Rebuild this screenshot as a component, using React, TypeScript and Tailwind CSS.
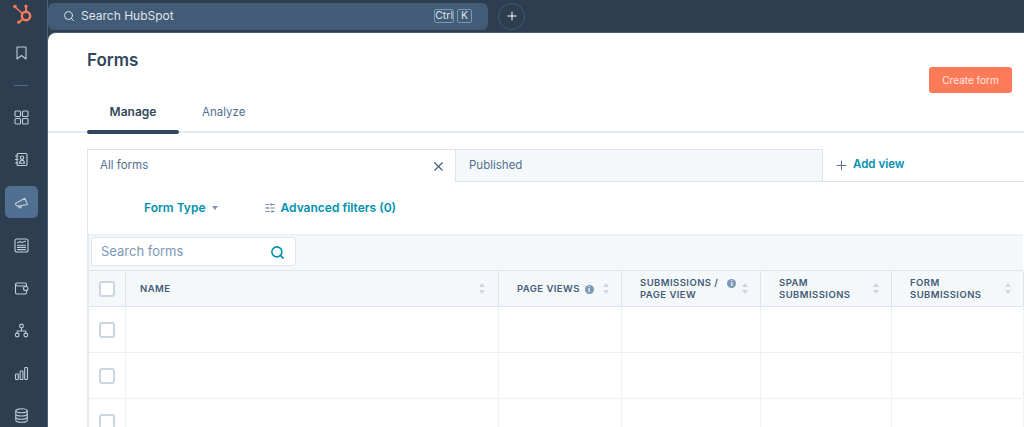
import { Plus, Search, SlidersHorizontal, X } from 'lucide-react';
import type { ReactNode } from 'react';

const FONT = "font-['Inter','Noto_Sans',sans-serif]";

function SproutLogo() {
  return (
    <svg width="22" height="22" viewBox="0 0 22 22" fill="none" stroke="#ff7a59" className="ml-[12px] mt-[3px] shrink-0">
      <circle cx="14" cy="13" r="4.2" strokeWidth="2.4" />
      <path d="M14 9V4" strokeWidth="2" />
      <circle cx="14" cy="3.2" r="1.6" fill="#ff7a59" stroke="none" />
      <path d="M10.6 10.5 3.5 4.5" strokeWidth="1.6" />
      <circle cx="3" cy="3.5" r="1.8" fill="#ff7a59" stroke="none" />
      <path d="M10.8 16.2 7.2 19" strokeWidth="1.8" />
      <circle cx="6.8" cy="19.2" r="1.6" fill="#ff7a59" stroke="none" />
    </svg>
  );
}

function Glyph({ children }: { children: ReactNode }) {
  return (
    <svg width="15" height="15" viewBox="0 0 15 15" fill="none" stroke="#c0ccd8" strokeWidth="1.1" strokeLinejoin="round" strokeLinecap="round">
      {children}
    </svg>
  );
}

const GridIcon = () => (
  <Glyph>
    <rect x="1" y="1" width="5.5" height="5.5" rx="1" />
    <rect x="8.5" y="1" width="5.5" height="5.5" rx="1" />
    <rect x="1" y="8.5" width="5.5" height="5.5" rx="1" />
    <rect x="8.5" y="8.5" width="5.5" height="5.5" rx="1" />
  </Glyph>
);

const ContactIcon = () => (
  <Glyph>
    <rect x="3" y="1.5" width="10" height="12" rx="1" />
    <path d="M1.5 4h2.5M1.5 7.5h2.5M1.5 11h2.5" />
    <circle cx="8" cy="5.7" r="1.7" />
    <path d="M5.5 11.2c.2-2 1.2-3 2.5-3s2.3 1 2.5 3z" />
  </Glyph>
);

const MegaphoneIcon = () => (
  <Glyph>
    <path d="M1.5 8.5 10.8 3.2l2.7 6.3-8.8 1.6-2.4-.4z" />
    <path d="M4.5 11l.7 2 2-.5-.6-1.9" />
  </Glyph>
);

const NewsIcon = () => (
  <Glyph>
    <rect x="1" y="1" width="13" height="13" rx="2" />
    <path d="M3.5 4.8 6 3.6l2 1 3.5-1.4M3.5 7.2h8M3.5 9.4h8M3.5 11.6h8" />
  </Glyph>
);

const WalletIcon = () => (
  <Glyph>
    <path d="M12.5 5V3.5A1.5 1.5 0 0 0 11 2H3a1.5 1.5 0 0 0-1.5 1.5v8A1.5 1.5 0 0 0 3 13h8a1.5 1.5 0 0 0 1.5-1.5V10" />
    <path d="M1.8 3.5c.4.9 1 1.5 2 1.5h8.7" />
    <rect x="9.5" y="5.5" width="4.5" height="4" rx="2" />
  </Glyph>
);

const TreeIcon = () => (
  <Glyph>
    <circle cx="7.5" cy="3" r="1.9" />
    <circle cx="3.2" cy="12" r="1.9" />
    <circle cx="11.8" cy="12" r="1.9" />
    <path d="M7.5 5v3M3.2 10V8h8.6v2" />
  </Glyph>
);

const BarsIcon = () => (
  <Glyph>
    <rect x="1.5" y="8" width="2.8" height="5.5" rx=".7" />
    <rect x="6.1" y="5" width="2.8" height="8.5" rx=".7" />
    <rect x="10.7" y="1.5" width="2.8" height="12" rx=".7" />
  </Glyph>
);

const DatabaseIcon = () => (
  <Glyph>
    <ellipse cx="7.5" cy="2.8" rx="5.7" ry="2" />
    <path d="M1.8 2.8v9.4c0 1.1 2.6 2 5.7 2s5.7-.9 5.7-2V2.8" />
    <path d="M1.8 6c0 1.1 2.6 2 5.7 2s5.7-.9 5.7-2M1.8 9.2c0 1.1 2.6 2 5.7 2s5.7-.9 5.7-2" />
  </Glyph>
);

function SortArrows() {
  return (
    <span className="flex flex-col gap-[3px]">
      <span className="h-0 w-0 border-x-[3.5px] border-b-[4.5px] border-x-transparent border-b-[#cbd6e2]" />
      <span className="h-0 w-0 border-x-[3.5px] border-t-[4.5px] border-x-transparent border-t-[#cbd6e2]" />
    </span>
  );
}

function InfoDot() {
  return (
    <span className="flex h-[9px] w-[9px] items-center justify-center rounded-full bg-[#7c98b6] text-[7px] font-bold leading-none text-white">
      i
    </span>
  );
}

function Checkbox() {
  return <span className="block h-4 w-4 rounded-[3px] border-2 border-[#cbd6e2] bg-white" />;
}

const SIDE_ICONS = [
  { icon: GridIcon, h: 'h-[42px]' },
  { icon: ContactIcon, h: 'h-[43px]' },
  { icon: MegaphoneIcon, h: 'h-[42px]', active: true },
  { icon: NewsIcon, h: 'h-[44px]' },
  { icon: WalletIcon, h: 'h-[42px]' },
  { icon: TreeIcon, h: 'h-[43px]' },
  { icon: BarsIcon, h: 'h-[42px]' },
  { icon: DatabaseIcon, h: 'h-[42px]' },
];

function Sidebar() {
  return (
    <aside className="flex w-[48px] shrink-0 flex-col items-start overflow-hidden border-r border-[#4a6078]">
      <SproutLogo />
      <div className="mt-[21px] w-[42px] shrink-0">
        <svg width="11" height="14" viewBox="0 0 11 14" fill="none" stroke="#c0ccd8" strokeWidth="1.1" strokeLinejoin="round" className="mx-auto">
          <path d="M1 1h9v12l-4.5-3.5L1 13z" />
        </svg>
      </div>
      <div className="ml-[14px] mt-[25px] h-px w-[14px] shrink-0 bg-[#516f90]" />
      <div className="mt-[10px] flex shrink-0 flex-col">
        {SIDE_ICONS.map(({ icon: Icon, h, active }, i) => (
          <div key={i} className={`flex w-[42px] items-center justify-center ${h}`}>
            <div className={`flex h-[32px] w-[33px] items-center justify-center rounded-[5px] ${active ? 'bg-[#516f90]' : ''}`}>
              <Icon />
            </div>
          </div>
        ))}
      </div>
    </aside>
  );
}

function TopBar() {
  return (
    <div className="flex h-[32px] shrink-0 items-center">
      <div className="flex h-[27px] w-[440px] items-center rounded-[6px] bg-[#425b76] pl-[15px] pr-[16px] text-[12px] text-[#dfe3eb]">
        <Search size={12} strokeWidth={2} className="mr-[6px]" />
        <span className="flex-1">Search HubSpot</span>
        <span className="mr-[3px] rounded-[2px] border border-[#7c98b6] text-[10.5px] leading-[12px]">Ctrl</span>
        <span className="rounded-[2px] border border-[#7c98b6] px-[3px] text-[10.5px] leading-[12px]">K</span>
      </div>
      <div className="ml-[10px] flex h-[27px] w-[27px] items-center justify-center rounded-full border border-[#425b76] text-white">
        <Plus size={14} strokeWidth={1.75} />
      </div>
    </div>
  );
}

function Header() {
  return (
    <div className="relative border-b-2 border-[#e5ebf2]">
      <h1 className="pl-[39px] pt-[16px] text-[17px] font-semibold leading-[22px] text-[#33475b]">Forms</h1>
      <div className="mt-[33px] flex pl-[39px] text-[12px] leading-[16px]">
        <div className="relative h-[27px] w-[92px] text-center font-semibold text-[#33475b]">
          Manage
          <span className="absolute inset-x-0 bottom-[-3px] h-[4px] rounded-[2px] bg-[#2e475d]" />
        </div>
        <div className="ml-[23px] text-[11.5px] text-[#516f90]">Analyze</div>
      </div>
      <button type="button" className="absolute right-[12px] top-[34px] h-[26px] w-[83px] rounded-[3px] bg-[#ff7a59] text-[10px] text-[#ffe9e3]">
        Create form
      </button>
    </div>
  );
}

function ViewTabs() {
  return (
    <div className="ml-[39px] mt-[16px] flex h-[33px]">
      <div className="flex w-[369px] items-center justify-between border-l border-r border-t border-[#dfe3eb] pl-[12px] pr-[9px] text-[11.5px] text-[#516f90]">
        All forms
        <X size={15} strokeWidth={1.75} className="text-[#425b76]" />
      </div>
      <div className="flex w-[367px] items-center border-b border-r border-t border-[#dfe3eb] bg-[#f5f8fa] pl-[13px] text-[11.5px] text-[#516f90]">
        Published
      </div>
      <div className="flex flex-1 items-center gap-[4px] border-b border-[#dfe3eb] pl-[11px] text-[11.5px] font-semibold text-[#0091ae]">
        <Plus size={15} strokeWidth={1.5} className="text-[#516f90]" />
        Add view
      </div>
    </div>
  );
}

function Filters() {
  return (
    <div className="ml-[39px] flex h-[52px] items-center border-l border-[#dfe3eb] pl-[56px] text-[12px] font-semibold text-[#0091ae]">
      Form Type
      <span className="ml-[6px] h-0 w-0 border-x-[3.5px] border-t-[4px] border-x-transparent border-t-[#7c98b6]" />
      <SlidersHorizontal size={12} strokeWidth={1.5} className="ml-[46px] text-[#516f90]" />
      <span className="ml-[5px]">Advanced filters (0)</span>
    </div>
  );
}

const COLUMNS = [
  { w: 'w-[373px]', label: ['NAME'], gap: 'gap-[5px]', pad: 'pl-[14px] pr-[13px]' },
  { w: 'w-[123px]', label: ['PAGE VIEWS'], info: true, gap: 'gap-[5px]', pad: 'pl-[18px] pr-[12px]' },
  { w: 'w-[139px]', label: ['SUBMISSIONS /', 'PAGE VIEW'], info: true, gap: 'gap-[9px]', pad: 'pl-[18px] pr-[12px]' },
  { w: 'w-[131px]', label: ['SPAM', 'SUBMISSIONS'], gap: 'gap-[5px]', pad: 'pl-[18px] pr-[12px]' },
  { w: 'w-[132px]', label: ['FORM', 'SUBMISSIONS'], gap: 'gap-[5px]', pad: 'pl-[18px] pr-[12px]' },
];

function Table() {
  return (
    <div className="ml-[39px] mr-[1px] border-l-2 border-[#e5ebf2]">
      <div className="flex h-[36px] items-start border-t-2 border-[#eef2f6] bg-[#f5f8fa] pl-[2px] pt-[1px]">
        <div className="flex h-[29px] w-[205px] items-center justify-between rounded-[3px] border border-[#dfe3eb] bg-white pl-[9px] pr-[10px] pt-[1px] text-[13px] text-[#7c98b6]">
          Search forms
          <Search size={15} strokeWidth={2.5} className="text-[#0091ae]" />
        </div>
      </div>
      <div className="flex h-[37px] border-y border-[#dfe3eb] bg-[#f5f8fa]">
        <div className="flex w-[37px] shrink-0 items-center justify-center border-r border-[#dfe3eb]">
          <Checkbox />
        </div>
        {COLUMNS.map((col, i) => (
          <div key={i} className={`flex shrink-0 items-center justify-between border-r border-[#dfe3eb] ${col.w} ${col.pad}`}>
            <div className={`flex items-start text-[9.5px] font-semibold leading-[12px] tracking-[0.45px] text-[#425b76] ${col.gap}`}>
              <div>
                {col.label.map((line) => (
                  <div key={line}>{line}</div>
                ))}
              </div>
              {col.info && <span className="mt-[2px]"><InfoDot /></span>}
            </div>
            <SortArrows />
          </div>
        ))}
      </div>
      {[0, 1, 2].map((row) => (
        <div key={row} className="flex h-[46px] border-b border-[#eaf0f6]">
          <div className="flex w-[37px] shrink-0 items-center justify-center border-r border-[#eaf0f6]">
            <Checkbox />
          </div>
          {COLUMNS.map((col, i) => (
            <div key={i} className={`shrink-0 border-r border-[#eaf0f6] ${col.w}`} />
          ))}
        </div>
      ))}
    </div>
  );
}

export default function App() {
  return (
    <div className={`flex h-[427px] w-[1024px] overflow-hidden bg-[#2d3e50] ${FONT}`}>
      <Sidebar />
      <div className="flex min-w-0 flex-1 flex-col">
        <TopBar />
        <main className="flex-1 overflow-hidden rounded-tl-[8px] border-t border-[#4a6078] bg-white">
          <Header />
          <ViewTabs />
          <Filters />
          <Table />
        </main>
      </div>
    </div>
  );
}
